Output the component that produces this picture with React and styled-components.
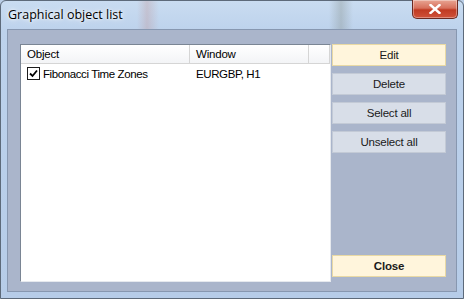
import React from "react";
import styled, { createGlobalStyle } from "styled-components";

const Global = createGlobalStyle`
  html, body { margin: 0; padding: 0; background: #b9cde6; }
  body { width: 464px; height: 299px; overflow: hidden; }
`;

const Frame = styled.div`
  position: relative;
  box-sizing: border-box;
  width: 464px;
  height: 299px;
  border: 1px solid #5d6a7a;
  border-radius: 6px 6px 0 0;
  background:
    linear-gradient(90deg, transparent 136px, rgba(190,140,140,0.3) 146px, transparent 158px),
    linear-gradient(90deg, transparent 328px, rgba(130,140,135,0.35) 340px, transparent 352px),
    linear-gradient(180deg, #c9dcf1 0px, #bdd2ec 30px, #b6cce8 100%);
  background-size: 100% 28px, 100% 28px, 100% 100%;
  background-repeat: no-repeat;
  display: flex;
  flex-direction: column;
  font-family: "Liberation Sans", Arial, sans-serif;
`;

const TitleBar = styled.div`
  height: 28px;
  display: flex;
  align-items: flex-start;
  padding: 5px 0 0 7px;
  box-sizing: border-box;
  font-family: "Open Sans", "Noto Sans", sans-serif;
  font-size: 12.5px;
  color: #000;
  text-shadow: 0 0 6px #fff, 0 0 3px #fff;
`;

const CloseX = styled.div`
  position: absolute;
  top: -1px;
  right: 5px;
  width: 46px;
  height: 19px;
  box-sizing: border-box;
  border: 1px solid #6b2a22;
  border-top: none;
  border-radius: 0 0 5px 5px;
  background: linear-gradient(180deg, #e8a593 0%, #d7705c 45%, #c03a22 55%, #d0523a 100%);
  box-shadow: inset 0 0 0 1px rgba(255,255,255,0.35);
  display: flex;
  align-items: center;
  justify-content: center;
`;

const Client = styled.div`
  margin: 0 6px 0 6px;
  height: 263px;
  box-sizing: border-box;
  border: 1px solid #8797b0;
  background: #aab5cb;
  display: flex;
  padding: 14px 10px 9px 12px;
  gap: 1px;
`;

const ListBox = styled.div`
  width: 311px;
  box-sizing: border-box;
  border: 1px solid #7a8594;
  border-right-color: #e6e9ee;
  border-bottom-color: #e6e9ee;
  background: #fff;
  display: flex;
  flex-direction: column;
`;

const HeaderRow = styled.div`
  display: grid;
  grid-template-columns: 169px 119px 1fr;
  height: 18px;
  background: linear-gradient(180deg, #ffffff 0%, #f3f4f6 100%);
  border-bottom: 1px solid #d5d5d5;
`;

const HeaderCell = styled.div`
  display: flex;
  align-items: center;
  padding-left: 6px;
  font-size: 11.5px;
  letter-spacing: -0.2px;
  color: #000;
  border-right: 1px solid #d5d5d5;
`;

const Row = styled.div`
  display: grid;
  grid-template-columns: 169px 119px 1fr;
  height: 19px;
  align-items: center;
`;

const Cell = styled.div`
  display: flex;
  align-items: center;
  gap: 3px;
  padding-left: 6px;
  font-size: 11.5px;
  letter-spacing: -0.4px;
  color: #000;
  white-space: nowrap;
`;

const Check = styled.span`
  width: 11px;
  height: 11px;
  border: 1px solid #1c1c1c;
  background: #fff;
  display: inline-flex;
  align-items: center;
  justify-content: center;
`;

const Side = styled.div`
  flex: 1;
  display: flex;
  flex-direction: column;
  gap: 7px;
  padding-bottom: 5px;
`;

const Button = styled.div`
  height: 22px;
  box-sizing: border-box;
  border: 1px solid ${(p) => (p.$primary ? "#e9d9a4" : "#c3cad6")};
  background: ${(p) => (p.$primary ? "#fff5dc" : "#d8dee8")};
  display: flex;
  align-items: center;
  justify-content: center;
  font-size: 11.5px;
  letter-spacing: -0.2px;
  font-weight: ${(p) => (p.$bold ? 700 : 400)};
  color: #1a1a1a;
  margin-top: ${(p) => (p.$push ? "auto" : "0")};
`;

export default function App() {
  return (
    <>
      <Global />
      <Frame>
        <TitleBar>Graphical object list</TitleBar>
        <CloseX>
          <svg width="12" height="10" viewBox="0 0 12 10">
            <path d="M1.5 1 L10.5 9 M10.5 1 L1.5 9" stroke="#fff" strokeWidth="2.4" strokeLinecap="square" />
          </svg>
        </CloseX>
        <Client>
          <ListBox>
            <HeaderRow>
              <HeaderCell>Object</HeaderCell>
              <HeaderCell>Window</HeaderCell>
              <HeaderCell />
            </HeaderRow>
            <Row>
              <Cell>
                <Check>
                  <svg width="9" height="9" viewBox="0 0 9 9">
                    <path d="M1 4.5 L3.5 7 L8 1.5" fill="none" stroke="#000" strokeWidth="1.8" />
                  </svg>
                </Check>
                Fibonacci Time Zones
              </Cell>
              <Cell>EURGBP, H1</Cell>
              <Cell />
            </Row>
          </ListBox>
          <Side>
            <Button $primary>Edit</Button>
            <Button>Delete</Button>
            <Button>Select all</Button>
            <Button>Unselect all</Button>
            <Button $primary $bold $push>Close</Button>
          </Side>
        </Client>
      </Frame>
    </>
  );
}
